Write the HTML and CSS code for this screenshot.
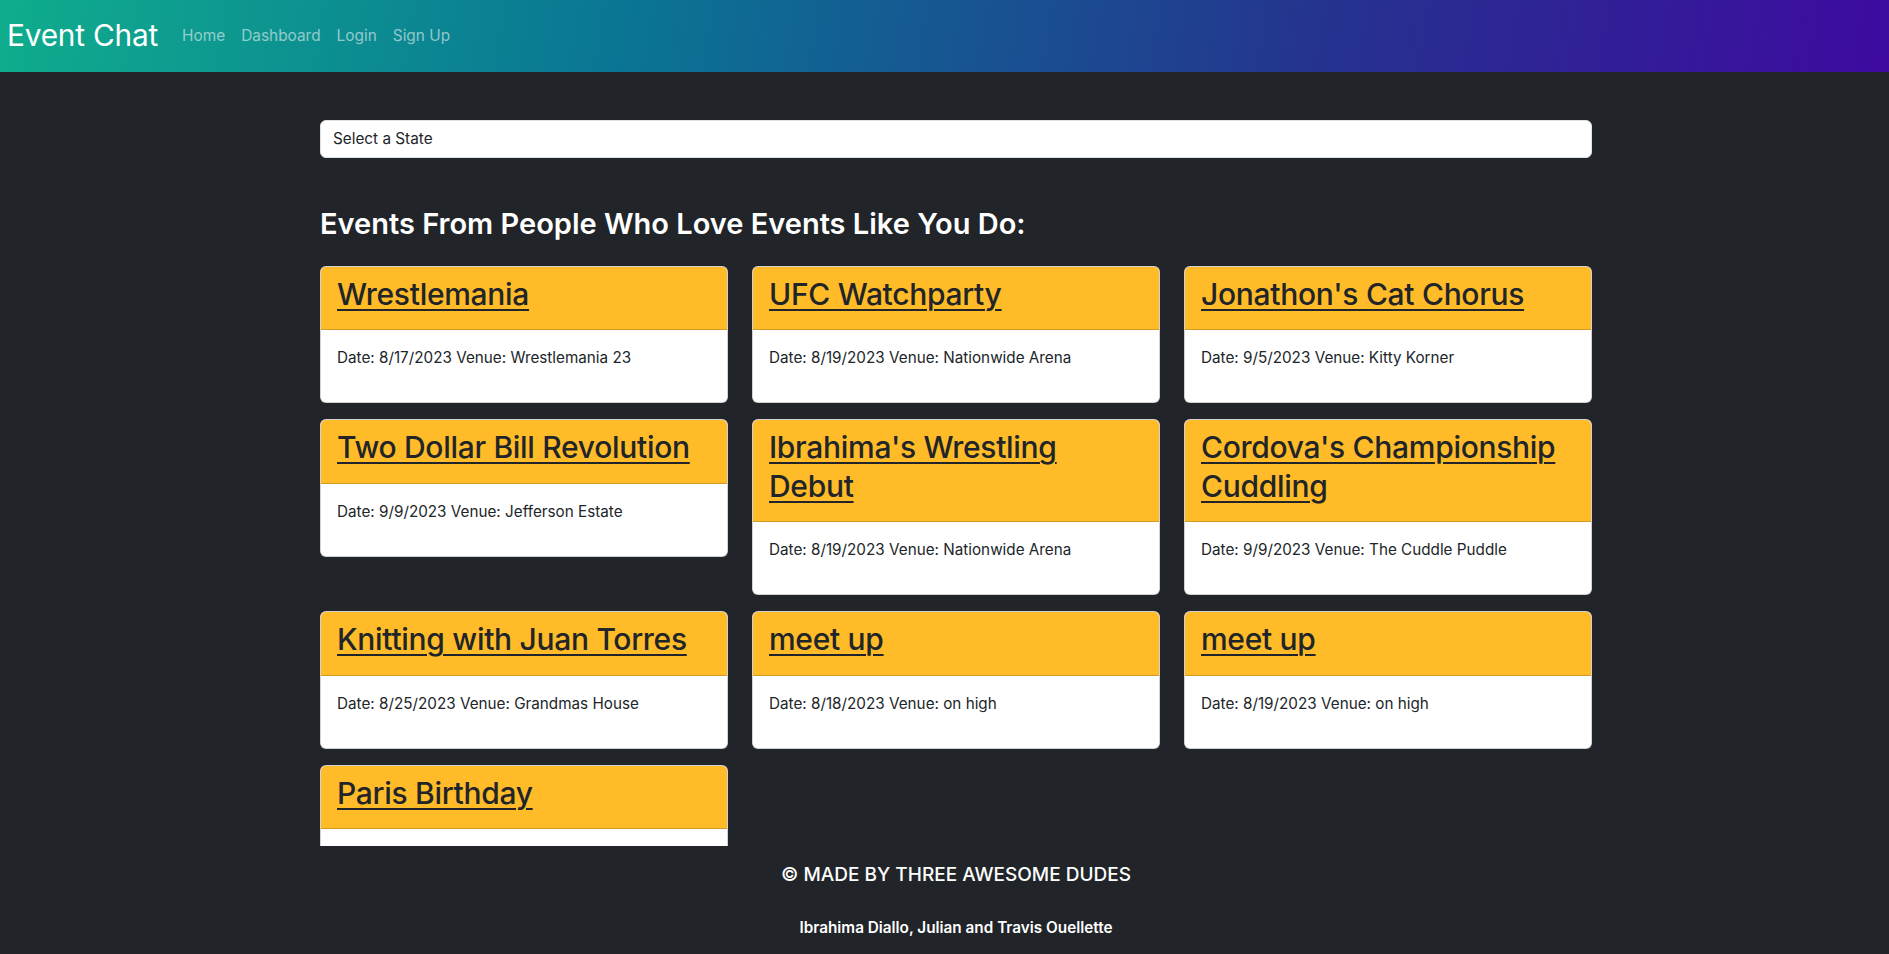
FILE: index.html
```html
<!DOCTYPE html>
<html lang="en">
<head>
<meta charset="utf-8">
<title>Event Chat</title>
<link rel="stylesheet" href="styles.css">
</head>
<body>
<nav class="navbar">
  <a class="brand" href="#">Event Chat</a>
  <ul class="nav-links">
    <li><a href="#">Home</a></li>
    <li><a href="#">Dashboard</a></li>
    <li><a href="#">Login</a></li>
    <li><a href="#">Sign Up</a></li>
  </ul>
</nav>
<main class="main">
  <div class="state-select">Select a State</div>
  <h3 class="section-title">Events From People Who Love Events Like You Do:</h3>
  <div class="events-viewport">
    <div class="events-grid">
      <div class="card">
        <div class="card-header"><h2><a href="#">Wrestlemania</a></h2></div>
        <div class="card-body"><p>Date: 8/17/2023 Venue: Wrestlemania 23</p></div>
      </div>
      <div class="card">
        <div class="card-header"><h2><a href="#">UFC Watchparty</a></h2></div>
        <div class="card-body"><p>Date: 8/19/2023 Venue: Nationwide Arena</p></div>
      </div>
      <div class="card">
        <div class="card-header"><h2><a href="#">Jonathon's Cat Chorus</a></h2></div>
        <div class="card-body"><p>Date: 9/5/2023 Venue: Kitty Korner</p></div>
      </div>
      <div class="card">
        <div class="card-header"><h2><a href="#">Two Dollar Bill Revolution</a></h2></div>
        <div class="card-body"><p>Date: 9/9/2023 Venue: Jefferson Estate</p></div>
      </div>
      <div class="card">
        <div class="card-header"><h2><a href="#">Ibrahima's Wrestling Debut</a></h2></div>
        <div class="card-body"><p>Date: 8/19/2023 Venue: Nationwide Arena</p></div>
      </div>
      <div class="card">
        <div class="card-header"><h2><a href="#">Cordova's Championship Cuddling</a></h2></div>
        <div class="card-body"><p>Date: 9/9/2023 Venue: The Cuddle Puddle</p></div>
      </div>
      <div class="card">
        <div class="card-header"><h2><a href="#">Knitting with Juan Torres</a></h2></div>
        <div class="card-body"><p>Date: 8/25/2023 Venue: Grandmas House</p></div>
      </div>
      <div class="card">
        <div class="card-header"><h2><a href="#">meet up</a></h2></div>
        <div class="card-body"><p>Date: 8/18/2023 Venue: on high</p></div>
      </div>
      <div class="card">
        <div class="card-header"><h2><a href="#">meet up</a></h2></div>
        <div class="card-body"><p>Date: 8/19/2023 Venue: on high</p></div>
      </div>
      <div class="card">
        <div class="card-header"><h2><a href="#">Paris Birthday</a></h2></div>
        <div class="card-body"><p>&nbsp;</p></div>
      </div>
    </div>
  </div>
</main>
<footer class="footer">
  <h5>© MADE BY THREE AWESOME DUDES</h5>
  <p>Ibrahima Diallo, Julian and Travis Ouellette</p>
</footer>
</body>
</html>
```
FILE: styles.css
```css
* { box-sizing: border-box; }
html, body { height: 100%; }
body {
  margin: 0;
  background: #212529;
  color: #fff;
  font-family: Inter, "Noto Sans", "Liberation Sans", sans-serif;
  font-size: 16px;
  line-height: 1.5;
  overflow: hidden;
}
.navbar {
  height: 72px;
  display: flex;
  align-items: center;
  padding-left: 7px;
  background: linear-gradient(100deg, #0fad8d 0%, #0a7594 33%, #25338f 70%, #3e0aa0 100%);
}
.brand {
  color: #fff;
  text-decoration: none;
  font-size: 29.8px;
  line-height: 1.2;
  margin-right: 16px;
  letter-spacing: -0.2px;
}
.nav-links {
  list-style: none;
  display: flex;
  margin: 0;
  padding: 0;
}
.nav-links a {
  display: block;
  padding: 8px 8px;
  color: rgba(255, 255, 255, 0.55);
  text-decoration: none;
  font-size: 15.4px;
}
.main {
  padding: 48px 297px 0 320px;
}
.state-select {
  height: 38px;
  background: #fff;
  color: #212529;
  border: 1px solid #dee2e6;
  border-radius: 6px;
  padding: 6px 12px;
  font-size: 15.3px;
  line-height: 24px;
}
.section-title {
  margin: 49px 0 25px;
  font-size: 29px;
  font-weight: 600;
  line-height: 34px;
  letter-spacing: 0;
}
.events-viewport {
  height: 580px;
  overflow: hidden;
}
.events-grid {
  display: grid;
  grid-template-columns: repeat(3, 1fr);
  column-gap: 24px;
  row-gap: 16px;
  align-items: start;
}
.card {
  background: #fff;
  border: 1px solid rgba(0, 0, 0, 0.175);
  border-radius: 6px;
  color: #212529;
}
.card-header {
  background: #ffbb28;
  padding: 8px 16px;
  border-bottom: 1px solid rgba(0, 0, 0, 0.175);
  border-radius: 5px 5px 0 0;
}
.card-header h2 {
  margin: 0 0 8px;
  font-size: 30px;
  font-weight: 500;
  line-height: 38.4px;
  letter-spacing: -0.3px;
}
.card-header a {
  color: #212529;
  text-decoration: underline;
  text-decoration-thickness: 2px;
  text-underline-offset: 4px;
}
.card-body {
  padding: 16px;
}
.card-body p {
  margin: 0 0 16px;
  font-size: 15.25px;
  line-height: 24px;
}
.footer {
  text-align: center;
  padding: 17px 0 0 23px;
}
.footer h5 {
  margin: 0;
  font-size: 19px;
  font-weight: 500;
  line-height: 24px;
}
.footer p {
  margin: 29px 0 0;
  font-size: 15.3px;
  font-weight: 600;
  line-height: 24px;
}
```
